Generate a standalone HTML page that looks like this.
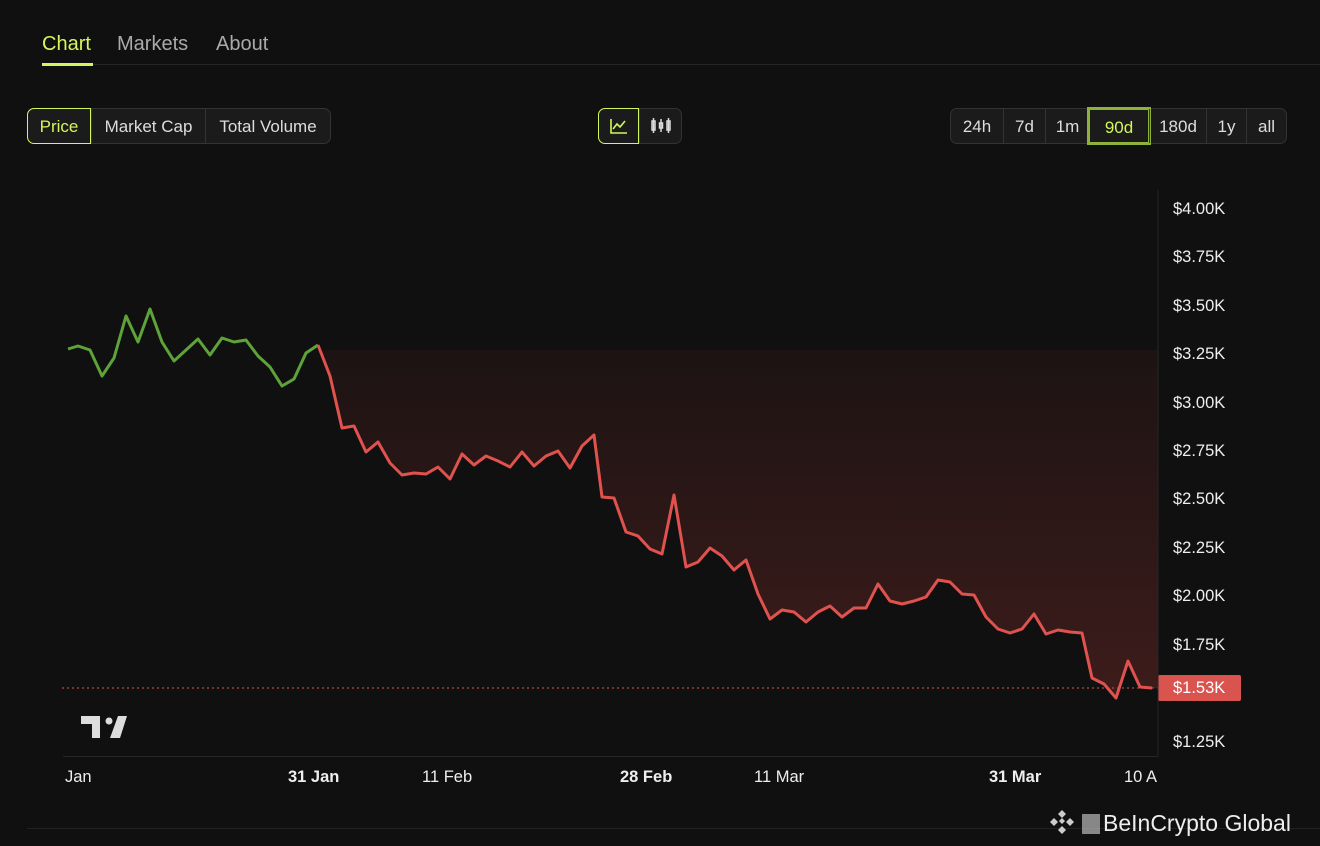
<!DOCTYPE html><html><head><style>
body{margin:0;width:1320px;height:846px;background:#101010;font-family:"Liberation Sans",sans-serif;color:#ddd;position:relative;overflow:hidden}
.a{position:absolute}
.tab{font-size:20px;top:33px}
.grp{position:absolute;display:flex;border:1px solid #333;border-radius:7px;background:#1b1b1b;height:36px;box-sizing:border-box}
.grp div{line-height:36px;font-size:17px;border-left:1px solid #333;color:#ddd;text-align:center;box-sizing:border-box}
.grp div:first-child{border-left:none}
.ax{position:absolute;font-size:16.5px;color:#eee}
</style></head><body>
<div class="a tab" style="left:42px;color:#d4f55c">Chart</div>
<div class="a tab" style="left:117px;color:#aaa">Markets</div>
<div class="a tab" style="left:216px;color:#aaa">About</div>
<div class="a" style="left:42px;top:64px;width:1278px;height:1px;background:#262626"></div>
<div class="a" style="left:42px;top:63px;width:51px;height:3px;background:#d4f55c"></div>

<div class="grp" style="left:27px;top:108px;width:304px">
<div style="width:64px;color:#d4f55c;border:1px solid #d4f55c;border-radius:7px 0 0 7px;margin:-1px 0 -1px -1px">Price</div><div style="width:114px">Market Cap</div><div style="width:125px">Total Volume</div></div>

<div class="grp" style="left:598px;top:108px;width:84px">
<div style="border:1px solid #d4f55c;border-radius:7px 0 0 7px;margin:-1px 0 -1px -1px;width:41px"><svg width="20" height="20" viewBox="0 0 20 20" style="margin-top:7px"><path d="M2 3V17H18M4 13L8 8L11 11L16 5" stroke="#d4f55c" stroke-width="1.6" fill="none"/></svg></div>
<div style="width:42px"><svg width="22" height="20" viewBox="0 0 22 20" style="margin-top:7px" stroke="#ddd" stroke-width="1.5" fill="none"><rect x="2" y="5" width="3" height="9"/><path d="M3.5 2V17M11 3V16M18.5 2V17"/><rect x="9.5" y="7" width="3" height="5"/><rect x="17" y="5" width="3" height="9"/></svg></div></div>

<div class="grp" style="left:950px;top:108px;width:337px">
<div style="width:52px">24h</div><div style="width:42px">7d</div><div style="width:44px">1m</div><div style="width:60px;color:#d4f55c;outline:3px solid #8db13a;outline-offset:-1px;border:1px solid #d4f55c">90d</div><div style="width:57px">180d</div><div style="width:40px">1y</div><div style="width:40px">all</div></div>

<div class="ax" style="left:1173px;top:200px">$4.00K</div>
<div class="ax" style="left:1173px;top:248px">$3.75K</div>
<div class="ax" style="left:1173px;top:297px">$3.50K</div>
<div class="ax" style="left:1173px;top:345px">$3.25K</div>
<div class="ax" style="left:1173px;top:394px">$3.00K</div>
<div class="ax" style="left:1173px;top:442px">$2.75K</div>
<div class="ax" style="left:1173px;top:490px">$2.50K</div>
<div class="ax" style="left:1173px;top:539px">$2.25K</div>
<div class="ax" style="left:1173px;top:587px">$2.00K</div>
<div class="ax" style="left:1173px;top:636px">$1.75K</div>
<div class="ax" style="left:1173px;top:733px">$1.25K</div>
<div class="a" style="left:1158px;top:675px;width:83px;height:26px;background:#d9534f;border-radius:2px;color:#fff;font-size:16.5px;line-height:27px;text-indent:15px">$1.53K</div>

<svg class="a" style="left:0;top:0" width="1320" height="846">
<defs><linearGradient id="g" x1="0" y1="350" x2="0" y2="700" gradientUnits="userSpaceOnUse"><stop offset="0" stop-color="#1d1313"/><stop offset="1" stop-color="#3d1c1b"/></linearGradient></defs>
<path d="M318,350 L1158,350 L1158,688 L1152,688 1140,687 1128,661 1116,698 1104,684 1092,678 1082,633 1070,632 1058,630 1046,634 1034,614 1022,629 1010,633 998,629 986,617 974,595 962,594 950,582 938,580 926,597 914,601 902,604 890,601 878,584 866,608 854,608 842,617 830,606 818,612 806,622 794,612 782,610 770,619 758,594 746,560 734,570 722,556 710,548 698,562 686,567 674,495 662,554 650,549 638,536 626,532 614,498 602,497 594,435 582,446 570,468 558,451 546,456 534,466 522,452 510,467 498,461 486,456 474,465 462,454 450,479 438,467 426,474 414,473 402,475 390,463 378,442 366,452 354,426 342,428 330,376 318,345Z" fill="url(#g)"/>
<line x1="62" y1="688" x2="1158" y2="688" stroke="#d9534f" stroke-dasharray="2 3"/>
<line x1="1158" y1="190" x2="1158" y2="756" stroke="#262626"/>
<line x1="63" y1="756.5" x2="1158" y2="756.5" stroke="#262626"/>
<line x1="27" y1="828.5" x2="1320" y2="828.5" stroke="#222"/>
<polyline fill="none" stroke="#5ea33a" stroke-width="3" stroke-linejoin="round" points="68,349 78,346 90,350 102,376 114,358 126,316 138,342 150,309 162,342 174,361 186,350 198,339 210,355 222,338 234,342 246,340 258,356 270,367 282,386 294,379 306,353 318,345"/>
<polyline fill="none" stroke="#e0524d" stroke-width="3" stroke-linejoin="round" points="318,345 330,376 342,428 354,426 366,452 378,442 390,463 402,475 414,473 426,474 438,467 450,479 462,454 474,465 486,456 498,461 510,467 522,452 534,466 546,456 558,451 570,468 582,446 594,435 602,497 614,498 626,532 638,536 650,549 662,554 674,495 686,567 698,562 710,548 722,556 734,570 746,560 758,594 770,619 782,610 794,612 806,622 818,612 830,606 842,617 854,608 866,608 878,584 890,601 902,604 914,601 926,597 938,580 950,582 962,594 974,595 986,617 998,629 1010,633 1022,629 1034,614 1046,634 1058,630 1070,632 1082,633 1092,678 1104,684 1116,698 1128,661 1140,687 1152,688"/>
<path d="M81 716H100V738H92V724H81Z M118 716H127L120 738H110Z" fill="#ddd"/><circle cx="109" cy="721" r="3.5" fill="#ddd"/>
<g fill="#ccc"><path d="M1062 810l4 4-4 4-4-4z M1054 818l4 4-4 4-4-4z M1070 818l4 4-4 4-4-4z M1062 826l4 4-4 4-4-4z M1062 818l3 3-3 3-3-3z"/></g>
<rect x="1082" y="814" width="18" height="20" fill="#bbb" opacity=".7"/>
</svg>
<div class="ax" style="left:65px;top:768px">Jan</div>
<div class="ax" style="left:288px;top:768px;font-weight:bold">31 Jan</div>
<div class="ax" style="left:422px;top:768px">11 Feb</div>
<div class="ax" style="left:620px;top:768px;font-weight:bold">28 Feb</div>
<div class="ax" style="left:754px;top:768px">11 Mar</div>
<div class="ax" style="left:989px;top:768px;font-weight:bold">31 Mar</div>
<div class="ax" style="left:1124px;top:768px">10 A</div>
<div class="a" style="left:1103px;top:810px;font-size:23px;color:#eee">BeInCrypto Global</div>
</body></html>
